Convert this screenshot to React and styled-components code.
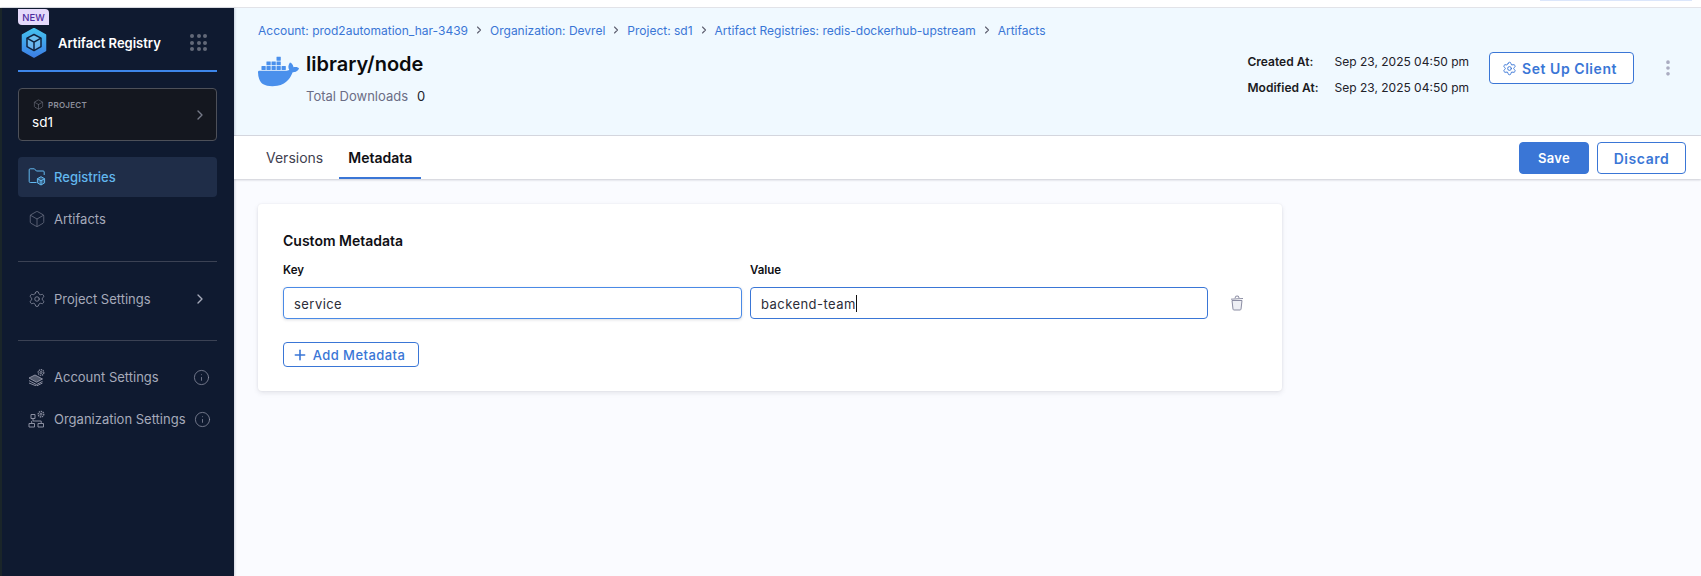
import React from 'react';
import styled, { createGlobalStyle } from 'styled-components';
import { Box, ChevronRight, EllipsisVertical, Info, Plus, Settings } from 'lucide-react';
import { SiDocker } from 'react-icons/si';

const GlobalStyle = createGlobalStyle`
  html, body {
    margin: 0;
    padding: 0;
    background: #fafbff;
    font-family: Inter, "Noto Sans", sans-serif;
  }
  * { box-sizing: border-box; }
`;

const Page = styled.div`
  width: 1701px;
  height: 576px;
  overflow: hidden;
  display: flex;
  flex-direction: column;
`;

const TopStrip = styled.div`
  height: 8px;
  flex: none;
  display: flex;
  justify-content: flex-end;
  padding-right: 9px;
  background: #fff;
  border-bottom: 1px solid #e2e3e8;
`;

const TopPill = styled.div`
  width: 152px;
  height: 1px;
  background: #dbe6fb;
`;

const Body = styled.div`
  flex: 1;
  display: flex;
  min-height: 0;
`;

const Sidebar = styled.aside`
  width: 234px;
  flex: none;
  display: flex;
  flex-direction: column;
  padding: 1px 17px 0 16px;
  background: #0f1a30;
  border-left: 2px solid #1a2529;
  box-shadow: 1px 0 2px rgba(30, 40, 70, 0.18);
  position: relative;
`;

const NewBadge = styled.div`
  width: 31px;
  height: 16px;
  align-self: flex-start;
  display: flex;
  align-items: center;
  justify-content: center;
  background: #e5dafb;
  color: #4d2c9e;
  font-size: 9.5px;
  font-weight: 500;
  border-radius: 0 4px 0 4px;
`;

const Brand = styled.div`
  height: 47px;
  display: flex;
  align-items: center;
  padding: 0 10px 10px 3px;
  border-bottom: 2px solid #3d86ea;
`;

const BrandName = styled.div`
  margin-left: 11px;
  flex: 1;
  color: #fff;
  font-size: 13px;
  font-weight: 600;
`;

const DotGrid = styled.div`
  display: grid;
  grid-template-columns: repeat(3, 4px);
  gap: 2.5px;
`;

const Dot = styled.span`
  width: 4px;
  height: 4px;
  border-radius: 50%;
  background: #626878;
`;

const ProjectCard = styled.div`
  height: 53px;
  margin: 16px 0;
  display: flex;
  align-items: center;
  justify-content: space-between;
  padding: 0 8px 0 13px;
  background: #14171f;
  border: 1px solid #4d5059;
  border-radius: 4px;
`;

const ProjectLabel = styled.div`
  display: flex;
  align-items: center;
  gap: 4px;
  color: #8c8f9c;
  font-size: 8px;
  font-weight: 600;
  letter-spacing: 0.25px;
  padding-left: 1px;
  margin-bottom: 4px;
`;

const ProjectName = styled.div`
  color: #fff;
  font-size: 13.5px;
  font-weight: 400;
  line-height: 16px;
`;

const NavItem = styled.div`
  height: 40px;
  display: flex;
  align-items: center;
  gap: 8px;
  padding: 0 7px 0 10px;
  font-size: 13px;
  font-weight: ${({ $active }) => ($active ? 500 : 400)};
  color: ${({ $active }) => ($active ? '#62b7ee' : '#a6aaba')};
  background: ${({ $active }) => ($active ? '#1f2d48' : 'transparent')};
  border-radius: 4px;
  margin-bottom: ${({ $gap }) => $gap || 2}px;
  white-space: nowrap;
`;

const NavLabel = styled.span`
  flex: 1;
`;

const NavChevron = styled(ChevronRight)`
  flex: none;
  width: 16px;
  height: 16px;
  margin-right: 2px;
  color: #a6aaba;
`;

const IconSlot = styled.span`
  width: 18px;
  height: 18px;
  flex: none;
  display: flex;
  align-items: center;
  justify-content: center;
`;

const NavInfo = styled(Info)`
  flex: none;
  width: 17px;
  height: 17px;
  color: #8b8fa1;
`;

const SideDivider = styled.div`
  height: 1px;
  flex: none;
  margin: ${({ $margin }) => $margin};
  background: #3b4254;
`;

const Main = styled.main`
  flex: 1;
  min-width: 0;
  display: flex;
  flex-direction: column;
`;

const Header = styled.header`
  height: 128px;
  flex: none;
  padding: 14px 23px 0 24px;
  background: #f0f9ff;
  border-bottom: 1px solid #d8dae2;
`;

const Breadcrumbs = styled.nav`
  display: flex;
  align-items: center;
  height: 16px;
  gap: 5px;
  font-size: 12px;
  color: #3a76d6;
`;

const Crumb = styled.span`
  white-space: nowrap;
`;

const HeaderRow = styled.div`
  display: flex;
  justify-content: space-between;
  align-items: flex-start;
`;

const TitleBlock = styled.div`
  display: flex;
  gap: 7px;
  padding-top: 12px;
`;

const DockerMark = styled(SiDocker)`
  color: #4a90ec;
  width: 41px;
  height: 41px;
  margin-top: 1px;
`;

const Title = styled.h1`
  margin: 0;
  font-size: 20px;
  line-height: 28px;
  font-weight: 600;
  color: #0b0b0d;
`;

const Downloads = styled.div`
  display: flex;
  gap: 9px;
  margin-top: 10px;
  font-size: 13px;
  line-height: 16px;
  color: #6b6d85;
`;

const DownloadCount = styled.span`
  color: #22222a;
`;

const HeaderActions = styled.div`
  display: flex;
  align-items: flex-start;
  padding-top: 14px;
`;

const MetaGrid = styled.dl`
  display: grid;
  grid-template-columns: 87px auto;
  grid-auto-rows: 26px;
  align-items: center;
  margin: -4px 20px 0 0;
  font-size: 12px;
  color: #22222a;
`;

const MetaKey = styled.dt`
  font-weight: 600;
  color: #1b1b22;
`;

const MetaValue = styled.dd`
  margin: 0;
  white-space: nowrap;
`;

const Button = styled.button`
  height: 32px;
  width: ${({ $width }) => $width}px;
  display: flex;
  align-items: center;
  justify-content: center;
  gap: 5px;
  padding: 0 ${({ $inset }) => $inset || 0}px 0 0;
  font-family: inherit;
  font-size: ${({ $primary }) => ($primary ? 13 : 14)}px;
  font-weight: 600;
  letter-spacing: ${({ $primary }) => ($primary ? 0.3 : 0.55)}px;
  color: ${({ $primary }) => ($primary ? '#fff' : '#3a76d6')};
  background: ${({ $primary }) => ($primary ? '#3a76d6' : '#fff')};
  border: 1px solid #3a76d6;
  border-radius: 4px;
`;

const MoreButton = styled.span`
  margin: 6px 0 0 24px;
  display: flex;
  color: #a9abc0;
`;

const TabBar = styled.div`
  height: 43px;
  flex: none;
  display: flex;
  align-items: stretch;
  justify-content: space-between;
  padding: 0 15px 0 23px;
  background: #fff;
  box-shadow: 0 1px 2px rgba(40, 41, 61, 0.22);
  position: relative;
`;

const Tabs = styled.div`
  display: flex;
  gap: 7px;
`;

const Tab = styled.div`
  display: flex;
  align-items: center;
  padding: 2px 9px 0;
  font-size: 14px;
  font-weight: ${({ $active }) => ($active ? 600 : 400)};
  color: ${({ $active }) => ($active ? '#0f0f14' : '#3f4150')};
  border-bottom: 2px solid ${({ $active }) => ($active ? '#3a76d6' : 'transparent')};
`;

const TabActions = styled.div`
  display: flex;
  align-items: center;
  gap: 8px;
  padding-top: 1px;
`;

const Content = styled.div`
  flex: 1;
  padding: 25px 0 0 24px;
  background: #fafbff;
`;

const Card = styled.section`
  width: 1024px;
  height: 187px;
  padding: 29px 25px;
  background: #fff;
  border-radius: 4px;
  box-shadow: 0 0 2px rgba(40, 41, 61, 0.08), 0 2px 5px rgba(96, 97, 112, 0.14);
`;

const CardTitle = styled.h2`
  margin: 0;
  font-size: 14px;
  line-height: 16px;
  font-weight: 600;
  color: #0f0f14;
`;

const FieldRow = styled.div`
  display: grid;
  grid-template-columns: 459px 458px auto;
  column-gap: 8px;
  margin-top: 13px;
`;

const FieldLabel = styled.div`
  font-size: 11.5px;
  line-height: 16px;
  font-weight: 600;
  color: #0f0f14;
  margin-bottom: 9px;
`;

const Field = styled.div`
  height: 32px;
  display: flex;
  align-items: center;
  padding: 1px 10px 0;
  font-size: 13px;
  letter-spacing: 0.45px;
  color: #2c2d38;
  background: #fff;
  border: 1px solid ${({ $focused }) => ($focused ? '#3a76d6' : '#4a8ae6')};
  border-radius: 4px;
  box-shadow: ${({ $focused }) => ($focused ? 'none' : '0 1px 3px rgba(40, 41, 61, 0.16)')};
`;

const Caret = styled.span`
  width: 1px;
  height: 17px;
  background: #111;
`;

const TrashSlot = styled.span`
  display: flex;
  align-self: end;
  margin: 0 0 8px 14px;
  color: #8b8da3;
`;

const AddButton = styled.button`
  width: 136px;
  height: 25px;
  margin-top: 23px;
  display: flex;
  align-items: center;
  justify-content: center;
  gap: 5px;
  padding: 0 5px 0 0;
  font-family: inherit;
  font-size: 13px;
  font-weight: 500;
  letter-spacing: 0.45px;
  color: #3a76d6;
  background: #fff;
  border: 1px solid #3a76d6;
  border-radius: 4px;
`;

const LogoIcon = () => (
  <svg width="26" height="30" viewBox="0 0 26 30" fill="none">
    <defs>
      <linearGradient id="logoFill" x1="0" y1="0" x2="0" y2="1">
        <stop offset="0" stopColor="#45c2ee" />
        <stop offset="1" stopColor="#3c7fe6" />
      </linearGradient>
    </defs>
    <path d="M13 0.5 24.5 7v15.5L13 29 1.5 22.5V7z" fill="url(#logoFill)" stroke="url(#logoFill)" strokeWidth="1.5" strokeLinejoin="round" />
    <path d="M13 6.5 20 10.2V18.6L13 22.6 6 18.6V10.2z" fill="#b9e4f7" fillOpacity="0.35" stroke="#10233f" strokeWidth="1.5" strokeLinejoin="round" />
    <path d="M6 10.2 13 14.2 20 10.2M13 14.2V22.6" stroke="#10233f" strokeWidth="1.5" />
  </svg>
);

const FolderBoxIcon = () => (
  <svg width="18" height="18" viewBox="0 0 18 18" fill="none" stroke="#62b7ee" strokeWidth="1">
    <path d="M8.5 14.5H2.2a1 1 0 0 1-1-1V1.8a1 1 0 0 1 1-1h4.2l2 2.2h6.8a1 1 0 0 1 1 1v3" strokeLinejoin="round" />
    <path d="M13 8.7l3.6 2v4.2L13 17l-3.6-2.1v-4.2z" fill="#62b7ee" fillOpacity="0.35" />
    <path d="M9.4 10.7 13 12.8l3.6-2.1M13 12.8V17" />
  </svg>
);

const StackGearIcon = () => (
  <svg width="18" height="18" viewBox="0 0 18 18" fill="none" stroke="#8b8fa1" strokeWidth="1">
    <path d="M1 10l6-3 7.5 4-6 3.2z" fill="#8b8fa1" fillOpacity="0.55" />
    <path d="M1 12.6 8.5 16.6l6-3.2M1 15l7.5 3 6-3" />
    <circle cx="13" cy="4.5" r="2.8" strokeDasharray="1.4 0.7" strokeWidth="1.3" />
    <circle cx="13" cy="4.5" r="1" />
  </svg>
);

const OrgGearIcon = () => (
  <svg width="18" height="18" viewBox="0 0 18 18" fill="none" stroke="#8b8fa1" strokeWidth="1">
    <path d="M3 4.5h4v4H3zM1 13.5h5.5V17H1zM10 13.5h5.5V17H10z" />
    <path d="M5 8.5v2.5h8.2v2.5M3.7 11v2.5" />
    <circle cx="13" cy="4.2" r="2.8" strokeDasharray="1.4 0.7" strokeWidth="1.3" />
    <circle cx="13" cy="4.2" r="1" />
  </svg>
);

const TrashIcon = () => (
  <svg width="14" height="16" viewBox="0 0 14 16" fill="none" stroke="currentColor" strokeWidth="1">
    <path d="M1 4.2 13 3.5M5 3.2 5.8 1.2l2.4-.2.9 2" />
    <path d="M2 5.5 3 14.2a1 1 0 0 0 1 .8h6a1 1 0 0 0 1-.8l1-8.7z" fill="#eeeff4" />
  </svg>
);

const crumbs = [
  'Account: prod2automation_har-3439',
  'Organization: Devrel',
  'Project: sd1',
  'Artifact Registries: redis-dockerhub-upstream',
  'Artifacts',
];

const App = () => (
  <>
    <GlobalStyle />
    <Page>
      <TopStrip>
        <TopPill />
      </TopStrip>
      <Body>
        <Sidebar>
          <NewBadge>NEW</NewBadge>
          <Brand>
            <LogoIcon />
            <BrandName>Artifact Registry</BrandName>
            <DotGrid>
              {Array.from({ length: 9 }).map((_, i) => (
                <Dot key={i} />
              ))}
            </DotGrid>
          </Brand>
          <ProjectCard>
            <div>
              <ProjectLabel>
                <Box size={11} strokeWidth={1.2} color="#787b88" />
                PROJECT
              </ProjectLabel>
              <ProjectName>sd1</ProjectName>
            </div>
            <ChevronRight size={16} color="#767a88" strokeWidth={2} />
          </ProjectCard>
          <NavItem $active>
            <IconSlot>
              <FolderBoxIcon />
            </IconSlot>
            <NavLabel>Registries</NavLabel>
          </NavItem>
          <NavItem $gap={22}>
            <IconSlot>
              <Box size={18} strokeWidth={1} color="#6e7386" />
            </IconSlot>
            <NavLabel>Artifacts</NavLabel>
          </NavItem>
          <SideDivider $margin="0 0 17px" />
          <NavItem $gap={21}>
            <IconSlot>
              <Settings size={18} strokeWidth={1.1} color="#8b8fa1" />
            </IconSlot>
            <NavLabel>Project Settings</NavLabel>
            <NavChevron strokeWidth={2} />
          </NavItem>
          <SideDivider $margin="0 0 16px" />
          <NavItem>
            <IconSlot>
              <StackGearIcon />
            </IconSlot>
            <NavLabel>Account Settings</NavLabel>
            <NavInfo strokeWidth={1.1} />
          </NavItem>
          <NavItem>
            <IconSlot>
              <OrgGearIcon />
            </IconSlot>
            <NavLabel>Organization Settings</NavLabel>
            <NavInfo strokeWidth={1.1} />
          </NavItem>
        </Sidebar>
        <Main>
          <Header>
            <Breadcrumbs>
              {crumbs.map((crumb, i) => (
                <React.Fragment key={crumb}>
                  {i > 0 && <ChevronRight size={12} strokeWidth={2.2} color="#5e6070" />}
                  <Crumb>{crumb}</Crumb>
                </React.Fragment>
              ))}
            </Breadcrumbs>
            <HeaderRow>
              <TitleBlock>
                <DockerMark />
                <div>
                  <Title>library/node</Title>
                  <Downloads>
                    Total Downloads <DownloadCount>0</DownloadCount>
                  </Downloads>
                </div>
              </TitleBlock>
              <HeaderActions>
                <MetaGrid>
                  <MetaKey>Created At:</MetaKey>
                  <MetaValue>Sep 23, 2025 04:50 pm</MetaValue>
                  <MetaKey>Modified At:</MetaKey>
                  <MetaValue>Sep 23, 2025 04:50 pm</MetaValue>
                </MetaGrid>
                <Button $width={145} $inset={4}>
                  <Settings size={15} strokeWidth={1.5} />
                  Set Up Client
                </Button>
                <MoreButton>
                  <EllipsisVertical size={20} strokeWidth={2.4} />
                </MoreButton>
              </HeaderActions>
            </HeaderRow>
          </Header>
          <TabBar>
            <Tabs>
              <Tab>Versions</Tab>
              <Tab $active>Metadata</Tab>
            </Tabs>
            <TabActions>
              <Button $primary $width={70}>
                Save
              </Button>
              <Button $width={89}>Discard</Button>
            </TabActions>
          </TabBar>
          <Content>
            <Card>
              <CardTitle>Custom Metadata</CardTitle>
              <FieldRow>
                <div>
                  <FieldLabel>Key</FieldLabel>
                  <Field>service</Field>
                </div>
                <div>
                  <FieldLabel>Value</FieldLabel>
                  <Field $focused>
                    backend-team
                    <Caret />
                  </Field>
                </div>
                <TrashSlot>
                  <TrashIcon />
                </TrashSlot>
              </FieldRow>
              <AddButton>
                <Plus size={16} strokeWidth={2.4} />
                Add Metadata
              </AddButton>
            </Card>
          </Content>
        </Main>
      </Body>
    </Page>
  </>
);

export default App;
